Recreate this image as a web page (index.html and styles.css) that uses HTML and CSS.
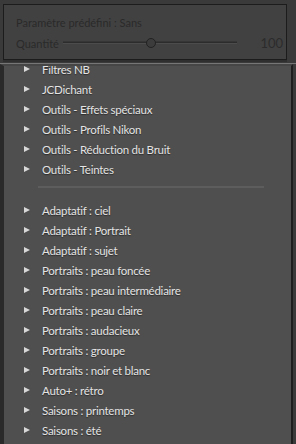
FILE: index.html
```html
<!DOCTYPE html>
<html lang="fr">
<head>
<meta charset="utf-8">
<link rel="stylesheet" href="styles.css">
</head>
<body>
<div class="app">
  <div class="top">
    <div class="preset-box">
      <div class="preset-title">Paramètre prédéfini : Sans</div>
      <div class="amount">
        <span class="amount-label">Quantité</span>
        <div class="slider">
          <div class="track"></div>
          <div class="thumb"></div>
        </div>
        <span class="amount-value">100</span>
      </div>
    </div>
  </div>
  <div class="list-panel">
    <div class="list">
      <div class="group first">
        <div class="row"><span class="tri"></span><span class="label">Filtres NB</span></div>
        <div class="row"><span class="tri"></span><span class="label">JCDichant</span></div>
        <div class="row"><span class="tri"></span><span class="label">Outils - Effets spéciaux</span></div>
        <div class="row"><span class="tri"></span><span class="label">Outils - Profils Nikon</span></div>
        <div class="row"><span class="tri"></span><span class="label">Outils - Réduction du Bruit</span></div>
        <div class="row"><span class="tri"></span><span class="label">Outils - Teintes</span></div>
      </div>
      <div class="sep"><div class="sep-line"></div></div>
      <div class="group">
        <div class="row"><span class="tri"></span><span class="label">Adaptatif : ciel</span></div>
        <div class="row"><span class="tri"></span><span class="label">Adaptatif : Portrait</span></div>
        <div class="row"><span class="tri"></span><span class="label">Adaptatif : sujet</span></div>
        <div class="row"><span class="tri"></span><span class="label">Portraits : peau foncée</span></div>
        <div class="row"><span class="tri"></span><span class="label">Portraits : peau intermédiaire</span></div>
        <div class="row"><span class="tri"></span><span class="label">Portraits : peau claire</span></div>
        <div class="row"><span class="tri"></span><span class="label">Portraits : audacieux</span></div>
        <div class="row"><span class="tri"></span><span class="label">Portraits : groupe</span></div>
        <div class="row"><span class="tri"></span><span class="label">Portraits : noir et blanc</span></div>
        <div class="row"><span class="tri"></span><span class="label">Auto+ : rétro</span></div>
        <div class="row"><span class="tri"></span><span class="label">Saisons : printemps</span></div>
        <div class="row"><span class="tri"></span><span class="label">Saisons : été</span></div>
      </div>
    </div>
  </div>
</div>
</body>
</html>
```
FILE: styles.css
```css
html, body {
  margin: 0;
  padding: 0;
  width: 296px;
  height: 444px;
  overflow: hidden;
  background: #3a3a3a;
  font-family: Lato, "Open Sans", sans-serif;
}
.app {
  display: flex;
  flex-direction: column;
  height: 444px;
}
.top {
  padding: 4px 9px 0 3px;
  height: 64px;
  box-sizing: border-box;
  background: #3a3a3a;
  border-bottom: 1px solid #767676;
}
.preset-box {
  height: 56px;
  box-sizing: border-box;
  border: 1px solid #1c1c1c;
  background: #414141;
  padding: 11px 2px 0 12px;
  color: #2a2a2a;
  box-shadow: 0 2px 0 #2f2f2f;
}
.preset-title {
  font-size: 11px;
  line-height: 14px;
}
.amount {
  display: flex;
  align-items: center;
  margin-top: 4px;
  height: 18px;
}
.amount-label {
  font-size: 11px;
  width: 47px;
}
.slider {
  position: relative;
  width: 174px;
  height: 10px;
}
.track {
  position: absolute;
  left: 0;
  right: 0;
  top: 3px;
  height: 1px;
  background: #2c2c2c;
  border-bottom: 1px solid #4c4c4c;
  border-top: 1px solid #363636;
}
.thumb {
  position: absolute;
  left: 83px;
  top: 0;
  width: 8px;
  height: 8px;
  border-radius: 50%;
  border: 1px solid #222;
  background: #3c3c3c;
}
.amount-value {
  margin-left: auto;
  font-size: 13px;
  color: #2c2c2c;
  padding-right: 1px;
}
.list-panel {
  border-top: 2px solid #464646;
  flex: 1;
  background: #4f4f4f;
  border-left: 4px solid #2a2a2a;
  margin-right: 3px;
  border-right: 2px solid #1e1e1e;
  overflow: hidden;
}
.list {
  margin-top: -7px;
}
.row {
  height: 20px;
  display: flex;
  align-items: center;
  padding-left: 20px;
}
.tri {
  width: 0;
  height: 0;
  border-top: 3.5px solid transparent;
  border-bottom: 3.5px solid transparent;
  border-left: 6px solid #d8d8d8;
  margin-right: 12px;
}
.label {
  font-size: 11.5px;
  letter-spacing: -0.25px;
  color: #e4e4e4;
  text-shadow: 0 1px 1px rgba(0,0,0,0.45);
  white-space: nowrap;
}
.sep {
  height: 21px;
  padding: 7px 27px 0 34px;
  box-sizing: border-box;
}
.sep-line {
  height: 2px;
  background: #5d5d5d;
}
```
